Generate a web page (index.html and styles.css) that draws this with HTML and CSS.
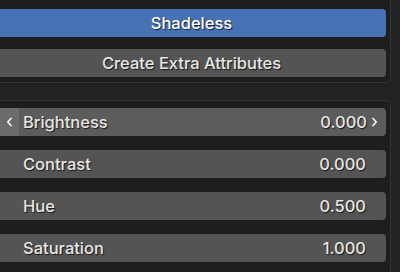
FILE: index.html
```html
<!DOCTYPE html>
<html lang="en">
  <head>
    <meta charset="UTF-8" />
    <title>Shading</title>
    <link rel="stylesheet" href="styles.css">
  </head>
  <body>
    <div class="panel panel-top">
      <button class="btn btn-active">Shadeless</button>
      <button class="btn">Create Extra Attributes</button>
    </div>

    <div class="panel panel-sliders">
      <div class="slider hover">
        <span class="arrow arrow-left">
          <svg width="7" height="10" viewBox="0 0 7 10"><path d="M5 1.5 L1.8 5 L5 8.5" fill="none" stroke="#f0f0f0" stroke-width="1.8" stroke-linecap="round" stroke-linejoin="round"/></svg>
        </span>
        <span class="label">Brightness</span>
        <span class="value">0.000</span>
        <span class="arrow arrow-right">
          <svg width="7" height="10" viewBox="0 0 7 10"><path d="M2 1.5 L5.2 5 L2 8.5" fill="none" stroke="#f0f0f0" stroke-width="1.8" stroke-linecap="round" stroke-linejoin="round"/></svg>
        </span>
      </div>
      <div class="slider">
        <span class="label">Contrast</span>
        <span class="value">0.000</span>
      </div>
      <div class="slider">
        <span class="label">Hue</span>
        <span class="value">0.500</span>
      </div>
      <div class="slider">
        <span class="label">Saturation</span>
        <span class="value">1.000</span>
      </div>
    </div>
  </body>
</html>
```

FILE: styles.css
```css
html, body {
  margin: 0;
  width: 400px;
  height: 272px;
  overflow: hidden;
  background-color: #222222;
  font-family: Inter, "Noto Sans", sans-serif;
  font-size: 16.5px;
  font-weight: 500;
  color: #e6e6e6;
}
.panel {
  box-sizing: border-box;
  margin: 0 9px 0 -8px;
  background-color: #1e1e1e;
  border: 1px solid #343434;
  border-radius: 6px;
  display: flex;
  flex-direction: column;
}
.panel-top {
  margin-top: -12px;
  padding: 20px 4px 5px 4px;
  gap: 12px;
}
.panel-sliders {
  margin-top: 17px;
  padding: 7px 4px 20px 4px;
  gap: 14px;
}
.btn {
  height: 28px;
  border: none;
  border-radius: 4px;
  background-color: #545454;
  color: #e6e6e6;
  font: inherit;
  text-shadow: 1px 1px 1px rgba(0,0,0,0.7);
  padding: 0;
}
.btn-active {
  background-color: #4772b3;
  color: #ffffff;
}
.slider {
  height: 28px;
  border-radius: 4px;
  background-color: #545454;
  display: flex;
  align-items: center;
  text-shadow: 1px 1px 1px rgba(0,0,0,0.7);
  padding-left: 26px;
  padding-right: 20px;
}
.slider.hover {
  background-color: #5c5c5c;
  padding-left: 0;
  padding-right: 4px;
}
.label {
  flex: 1;
}
.arrow {
  display: flex;
  align-items: center;
  justify-content: center;
  align-self: stretch;
}
.arrow-left {
  width: 19px;
  padding-left: 3px;
  margin-right: 4px;
  background-color: #6b6b6b;
  border-radius: 4px 0 0 4px;
}
.arrow-right {
  width: 15px;
}
```
